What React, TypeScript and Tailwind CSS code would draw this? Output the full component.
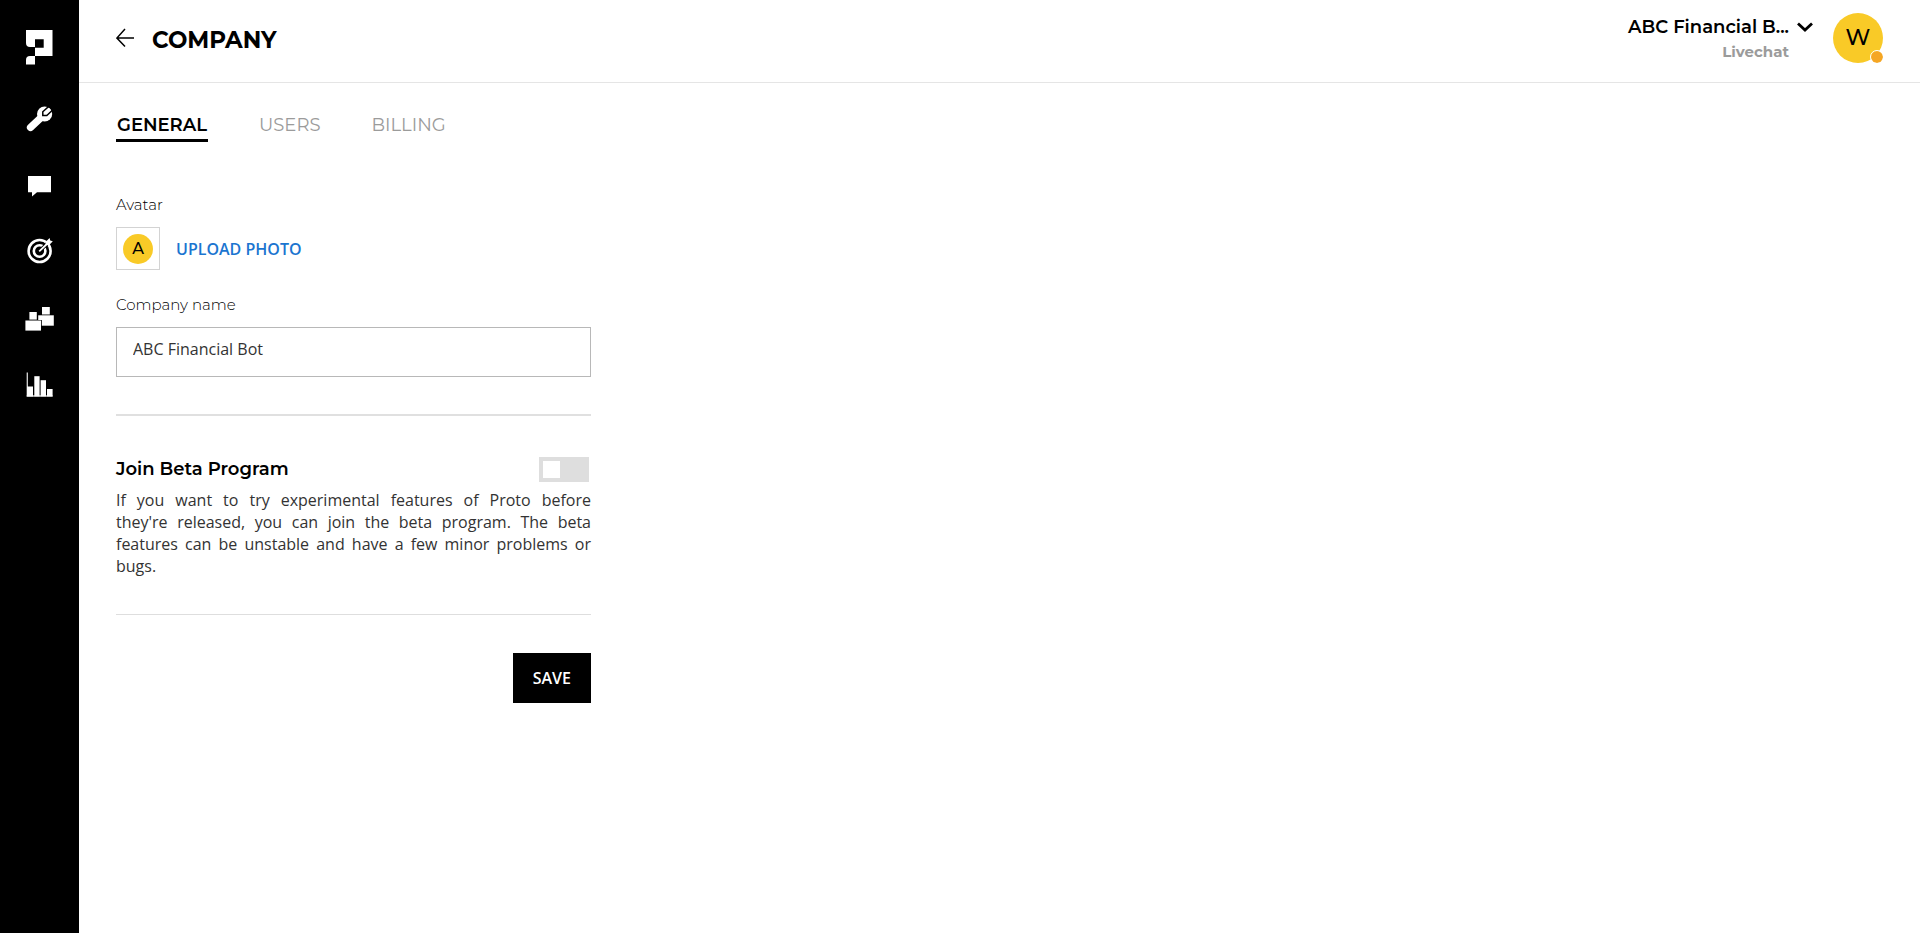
import React, { useState } from "react";

const heading = "font-['Montserrat','Inter',sans-serif]";
const body = "font-['Open_Sans',sans-serif]";

function Logo() {
  return (
    <svg width="27" height="35" viewBox="0 0 27 35" fill="white" aria-hidden="true">
      <path fillRule="evenodd" d="M0 0H26.5V26H9V17H4Q0 17 0 13ZM9 9.3V17.7H17.7V9.3Z" />
      <path d="M9 26V34.5H0V30Q0 26 4 26Z" />
    </svg>
  );
}

function WrenchIcon() {
  return (
    <svg width="32" height="32" viewBox="0 0 32 32" aria-hidden="true">
      <path d="M6.6 25.4L17 15.6" stroke="white" strokeWidth="7.4" strokeLinecap="round" />
      <circle cx="20.6" cy="12" r="7.6" fill="white" />
      <path d="M24.8 4.4L18.8 9.8V13.6H22.8L28.6 8" fill="none" stroke="black" strokeWidth="1.5" />
      <path d="M21.6 11L25.8 6.8" stroke="white" strokeWidth="3" />
    </svg>
  );
}

function ChatIcon() {
  return (
    <svg width="32" height="32" viewBox="0 0 32 32" fill="white" aria-hidden="true">
      <path d="M4 7H27V23.3H13L8 27.5V23.3H4Z" />
    </svg>
  );
}

function TargetIcon() {
  return (
    <svg width="32" height="32" viewBox="0 0 32 32" fill="none" stroke="white" aria-hidden="true">
      <circle cx="15.6" cy="15" r="11" strokeWidth="2.6" />
      <circle cx="15.6" cy="15" r="5.8" strokeWidth="2.6" />
      <path d="M15.6 15L28 3" stroke="black" strokeWidth="3.6" />
      <path d="M15.2 15.4L24 7" strokeWidth="1.8" />
      <path d="M21.4 8.8L21.8 5.8L25.6 2L26.2 4.6L28.8 5.2L25 9.2Z" fill="white" stroke="none" />
    </svg>
  );
}

function BoxesIcon() {
  return (
    <svg width="32" height="32" viewBox="0 0 32 32" fill="white" aria-hidden="true">
      <path d="M18 4H25.8V11.5H18Z" />
      <path d="M14.2 12.3H29.8V22.7H14.2Z" />
      <path d="M4.6 8.2H13.6V17H17.8V28H.5V17H4.6Z" fill="black" />
      <path d="M5.4 9H12.8V16.6H5.4Z" />
      <path d="M1.4 17.5H17V27.6H1.4Z" />
    </svg>
  );
}

function ChartIcon() {
  return (
    <svg width="32" height="32" viewBox="0 0 32 32" fill="white" aria-hidden="true">
      <path d="M2.7 2.6H3.8V16.4H9V26.4H2.7Z" />
      <path d="M10.3 6.2H15.6V26.4H10.3Z" />
      <path d="M16.6 10.2H22V26.4H16.6Z" />
      <path d="M23 19H28.6V26.4H23Z" />
      <path d="M2.7 25.4H28.6V26.6H2.7Z" />
    </svg>
  );
}

const navItems = [
  { label: "Setup", Icon: WrenchIcon },
  { label: "Chats", Icon: ChatIcon },
  { label: "Targets", Icon: TargetIcon },
  { label: "Modules", Icon: BoxesIcon },
  { label: "Analytics", Icon: ChartIcon },
];

function Sidebar() {
  return (
    <aside className="w-[79px] shrink-0 bg-black pt-[30px] pl-6">
      <a href="#home" aria-label="Home" className="ml-[2px] block w-[27px]">
        <Logo />
      </a>
      <nav className="mt-[37px] flex flex-col gap-[35px]">
        {navItems.map(({ label, Icon }) => (
          <a key={label} href={"#" + label.toLowerCase()} aria-label={label} className="block size-8">
            <Icon />
          </a>
        ))}
      </nav>
    </aside>
  );
}

function Header() {
  return (
    <header className="flex h-[83px] items-start justify-between border-b border-[#e5e5e5] px-[37px]">
      <div className="flex items-center gap-[17px] pt-6">
        <button type="button" aria-label="Back" className="pb-1">
          <svg width="19" height="20" viewBox="0 0 19 20" fill="none" stroke="black" strokeWidth="1.5" aria-hidden="true">
            <path d="M18 10H1M9 1L0.9 10L9 18.5" />
          </svg>
        </button>
        <h1 className={`${heading} text-[23px] leading-8 font-bold text-black`}>COMPANY</h1>
      </div>
      <div className="flex items-start">
        <div className="flex flex-col items-end pt-4">
          <button type="button" className={`${heading} flex items-center gap-2 text-lg leading-[22px] font-semibold text-black`}>
            ABC Financial B...
            <svg width="16" height="10" viewBox="0 0 16 10" fill="none" stroke="black" strokeWidth="2.8" aria-hidden="true">
              <path d="M1 1.4L8 8L15 1.4" />
            </svg>
          </button>
          <span className={`${heading} mt-[3px] mr-6 text-[15px] leading-[22px] font-bold text-[#9b9b9b]`}>Livechat</span>
        </div>
        <div className="relative mt-[13px] ml-5">
          <div className={`${heading} flex size-[50px] items-center justify-center rounded-full bg-[#f9ca27] pb-[2px] text-[22px] font-medium text-black`}>
            W
          </div>
          <span className="absolute right-0 bottom-0 size-3 rounded-full bg-[#f5a623] outline outline-white" />
        </div>
      </div>
    </header>
  );
}

function Tabs() {
  return (
    <nav className={`${heading} flex items-start gap-[51px] text-lg leading-6`}>
      <a href="#general" aria-current="page" className="border-b-[3px] border-black px-px pb-[2px] font-semibold text-black">
        GENERAL
      </a>
      <a href="#users" className="text-[#9b9b9b]">USERS</a>
      <a href="#billing" className="text-[#9b9b9b]">BILLING</a>
    </nav>
  );
}

function CompanyForm() {
  const [name, setName] = useState("ABC Financial Bot");
  const [beta, setBeta] = useState(false);
  return (
    <form className="mt-[53px] w-full max-w-[475px]" onSubmit={(e) => e.preventDefault()}>
      <div className={`${heading} text-[15px] leading-5 font-light text-black`}>Avatar</div>
      <div className="mt-3 flex items-center gap-4">
        <div className="flex h-[43px] w-11 items-center justify-center border border-[#d3d3d3]">
          <span className={`${heading} flex size-[30px] items-center justify-center rounded-full bg-[#f9ca27] text-base font-medium text-black`}>
            A
          </span>
        </div>
        <button type="button" className={`${body} text-base leading-6 font-semibold text-[#1b75d0]`}>UPLOAD PHOTO</button>
      </div>
      <label htmlFor="company-name" className={`${heading} mt-[25px] block text-[15px] leading-5 font-light text-black`}>
        Company name
      </label>
      <input
        id="company-name"
        value={name}
        onChange={(e) => setName(e.target.value)}
        className={`${body} mt-3 block h-[50px] w-full border border-[#b8b8b8] px-4 pb-[6px] text-base text-[#333333] outline-none`}
      />
      <hr className="mt-[37px] border-t-2 border-[#e0e0e0]" />
      <div className="mt-10 flex items-center justify-between pr-[2px]">
        <label htmlFor="beta" className={`${heading} text-lg leading-[26px] font-semibold text-black`}>
          Join Beta Program
        </label>
        <input
          id="beta"
          type="checkbox"
          role="switch"
          checked={beta}
          onChange={(e) => setBeta(e.target.checked)}
          className="h-[25px] w-[50px] appearance-none bg-[#dedede] p-1 before:block before:h-[17px] before:w-[17px] before:bg-white checked:bg-black checked:before:ml-auto"
        />
      </div>
      <p className={`${body} mt-[7px] text-justify text-base leading-[22px] text-[#333333]`}>
        If you want to try experimental features of Proto before they're&nbsp;released, you can join the beta program.
        The beta features&nbsp;can be unstable and have a few minor problems or bugs.
      </p>
      <hr className="mt-[37px] border-[#dedede]" />
      <div className="mt-[38px] flex justify-end">
        <button type="submit" className={`${body} h-[50px] bg-black px-5 text-base font-semibold text-white`}>
          SAVE
        </button>
      </div>
    </form>
  );
}

export default function App() {
  return (
    <div className="flex min-h-screen bg-white">
      <Sidebar />
      <div className="min-w-0 flex-1">
        <Header />
        <main className="px-[37px] pt-[30px]">
          <Tabs />
          <CompanyForm />
        </main>
      </div>
    </div>
  );
}
